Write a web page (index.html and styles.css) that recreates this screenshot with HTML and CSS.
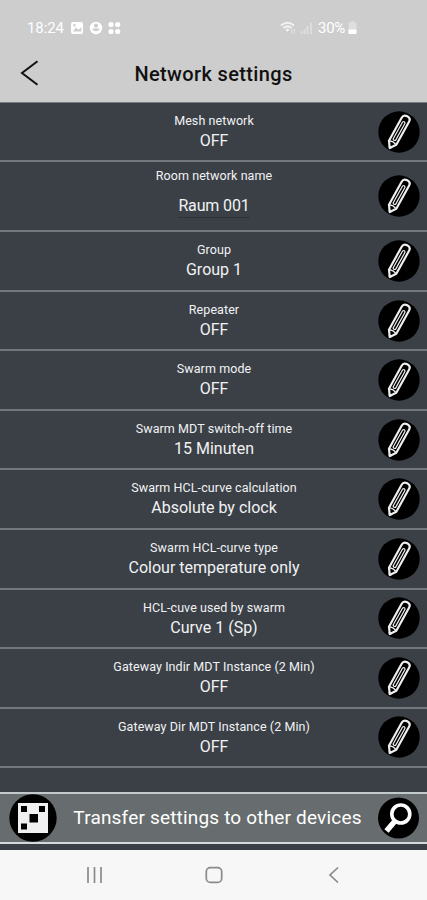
FILE: index.html
```html
<!DOCTYPE html>
<html lang="en">
<head>
<meta charset="utf-8">
<title>Network settings</title>
<link rel="stylesheet" href="styles.css">
</head>
<body>
<svg class="defs" width="0" height="0">
  <symbol id="pencil" viewBox="0 0 42 42">
    <circle cx="21" cy="21" r="20.7" fill="#000"/>
    <g transform="translate(20.700 20.800) rotate(29)" fill="none" stroke="#eee" stroke-linejoin="round">
      <path d="M-4.200 12.500V-14Q-4.200-17.700 0-17.700T4.200-14V12.500L0 18.500Z" stroke-width="2.200"/>
      <path d="M-1.400 9V-10.500Q0-12.500 1.400-10.500V9Q0 10.500-1.400 9Z" stroke-width="1.200"/>
      <path d="M-4.200 12.500Q0 10.800 4.200 12.500" stroke-width="1.200"/>
      <path d="M-1 17.500L0 18.500L1 17.500Z" fill="#eee" stroke-width="1.500"/>
    </g>
  </symbol>
</svg>
<header class="header">
  <div class="status">
    <span class="time">18:24</span>
    <svg class="status-apps" width="52" height="14" viewBox="0 0 52 14" fill="#fff">
      <path fill-rule="evenodd" d="M3 1h8q2 0 2 2v8q0 2-2 2H3q-2 0-2-2V3q0-2 2-2ZM2.800 10.500h8.600V6L8.500 8.700 6 6.600ZM3.500 3v2.500h2V3Z"/>
      <path fill-rule="evenodd" transform="translate(6.200 0)" d="M26 7a6.200 6.200 0 1 1-12.400 0A6.200 6.200 0 0 1 26 7ZM19.800 2.500a2.100 2.100 0 1 0 .01 0ZM16 8.200q3.800 4.300 7.600 0l-.5-.7h-6.600Z"/>
      <circle cx="41" cy="3.500" r="2.600"/><circle cx="47.700" cy="3.500" r="2.600"/><circle cx="41" cy="10.500" r="2.600"/><circle cx="47.700" cy="10.500" r="2.600"/>
    </svg>
    <svg class="status-signal" width="34" height="14" viewBox="0 0 34 14" fill="none" stroke="#f2f2f2">
      <path d="M1 4.500Q7.500-1 14 4.500M3.500 7Q7.500 3.700 11.500 7" stroke-width="2"/>
      <path d="M5.500 8.500Q7.500 7 9.500 8.500L7.500 11Z" fill="#f2f2f2" stroke="none"/>
      <path d="M11.700 8v4.500M14.300 8v4.500" stroke-width="1" opacity=".65"/>
      <path d="M21.500 13V10M24.500 13V8M27.500 13V5" stroke-width="2" opacity=".45"/>
      <path d="M31 13V1.500" stroke-width="1.400" opacity=".6"/>
    </svg>
    <span class="battery-text">30%</span>
    <svg class="battery" width="9" height="13" viewBox="0 0 9 13"><path d="M3 0h3v1.500h2.500V12q0 1-1 1h-6q-1 0-1-1V1.500H3Z" fill="#dedede"/><path d="M.5 8.500h8V12q0 1-1 1h-6q-1 0-1-1Z" fill="#fff"/></svg>
  </div>
  <div class="titlebar">
    <svg class="back" width="20" height="26" viewBox="0 0 20 26" fill="none" stroke="#111" stroke-width="2"><path d="M17.500 1.200 2 13l15.500 11.800"/></svg>
    <h1 class="title">Network settings</h1>
  </div>
</header>
<main class="list">
  <div class="row first"><div class="text"><div class="label">Mesh network</div><div class="value">OFF</div></div><svg class="edit"><use href="#pencil"/></svg></div>
  <div class="row tall"><div class="text"><div class="label">Room network name</div><div class="value input">Raum 001</div></div><svg class="edit"><use href="#pencil"/></svg></div>
  <div class="row"><div class="text"><div class="label">Group</div><div class="value">Group 1</div></div><svg class="edit"><use href="#pencil"/></svg></div>
  <div class="row"><div class="text"><div class="label">Repeater</div><div class="value">OFF</div></div><svg class="edit"><use href="#pencil"/></svg></div>
  <div class="row"><div class="text"><div class="label">Swarm mode</div><div class="value">OFF</div></div><svg class="edit"><use href="#pencil"/></svg></div>
  <div class="row"><div class="text"><div class="label">Swarm MDT switch-off time</div><div class="value">15 Minuten</div></div><svg class="edit"><use href="#pencil"/></svg></div>
  <div class="row"><div class="text"><div class="label">Swarm HCL-curve calculation</div><div class="value">Absolute by clock</div></div><svg class="edit"><use href="#pencil"/></svg></div>
  <div class="row"><div class="text"><div class="label">Swarm HCL-curve type</div><div class="value">Colour temperature only</div></div><svg class="edit"><use href="#pencil"/></svg></div>
  <div class="row"><div class="text"><div class="label">HCL-cuve used by swarm</div><div class="value">Curve 1 (Sp)</div></div><svg class="edit"><use href="#pencil"/></svg></div>
  <div class="row"><div class="text"><div class="label">Gateway Indir MDT Instance (2 Min)</div><div class="value">OFF</div></div><svg class="edit"><use href="#pencil"/></svg></div>
  <div class="row"><div class="text"><div class="label">Gateway Dir MDT Instance (2 Min)</div><div class="value">OFF</div></div><svg class="edit"><use href="#pencil"/></svg></div>
</main>
<div class="transfer">
  <svg class="code" width="48" height="48" viewBox="0 0 48 48"><circle cx="24" cy="24" r="23.700"/><path fill="#f0f0f0" d="M9 9h30v30H9z"/><path d="M12 12h6v6h-6zM30 12h6v6h-6zM20.500 20h8.500v8.500h-8.500zM12 29.500h6v6h-6z"/></svg>
  <span class="transfer-text">Transfer settings to other devices</span>
  <svg class="search" width="41" height="42" viewBox="0 0 41 42"><circle cx="20.500" cy="21" r="20.500"/><g fill="none" stroke="#fff"><circle cx="22.800" cy="17" r="9" stroke-width="3.600"/><path d="M17 24 8.500 34" stroke-width="5.500"/></g></svg>
</div>
<nav class="nav">
  <svg width="18" height="18" viewBox="0 0 18 18" fill="none" stroke="#8a8a8a" stroke-width="1.700"><path d="M3 1v16M9.500 1v16M16 1v16"/></svg>
  <svg width="18" height="18" viewBox="0 0 18 18" fill="none" stroke="#8a8a8a" stroke-width="1.700"><rect x="1.300" y="1.600" width="15.400" height="14.800" rx="4"/></svg>
  <svg width="18" height="18" viewBox="0 0 18 18" fill="none" stroke="#8a8a8a" stroke-width="1.700"><path d="M13 1.500 5 9l8 7.500"/></svg>
</nav>
</body>
</html>
```
FILE: styles.css
```css
* { box-sizing: border-box; }
body { margin: 0; width: 427px; height: 900px; display: flex; flex-direction: column; overflow: hidden; background: #3b4047; font-family: Roboto, sans-serif; }
svg { display: block; flex: none; }
.defs { position: absolute; }
.header { display: flex; flex-direction: column; height: 103px; background: #cdcdcd; border-bottom: 1px solid #777d80; }
.status { display: flex; align-items: center; height: 28px; margin-top: 14px; padding-left: 27px; color: #fff; font-size: 15px; }
.time { width: 43px; letter-spacing: -.1px; }
.status-signal { margin-left: 158px; }
.battery-text { margin-left: 4px; width: 30px; letter-spacing: -.3px; }
.titlebar { display: grid; grid-template-columns: 40px 1fr 40px; align-items: center; height: 60px; padding-top: 2px; }
.titlebar { flex: none; margin-top: 1px; }
.back { margin-left: 20px; }
.title { margin: 1px 0 0; text-align: center; font-size: 20px; font-weight: 500; color: #111; letter-spacing: .36px; }
.list { flex: none; }
.row { display: grid; grid-template-columns: 49px 1fr 49px; height: 59.550px; border-bottom: 2px solid #71777b; color: #f1f2f3; }
.row.first { height: 59.200px; }
.row.tall { height: 70.100px; }
.text { grid-column: 2; text-align: center; padding: 9px 0 0 1px; white-space: nowrap; }
.first .text { padding-top: 8.500px; }
.tall .text { padding-top: 5px; }
.label { font-size: 12.500px; line-height: 18px; letter-spacing: .08px; }
.value { font-size: 16px; line-height: 22px; }
.value.input { display: inline-block; margin-top: 9px; line-height: 23px; letter-spacing: -.15px; border-bottom: 1px solid #2e3337; }
.edit { width: 42px; height: 42px; align-self: center; }
.transfer { display: flex; align-items: center; height: 52px; margin-top: 23.500px; padding: 0 8px 0 9px; background: #676d6e; border-top: 2px solid #c2cacb; border-bottom: 2px solid #d5dada; color: #fff; flex: none; }
.transfer-text { flex: 1; text-align: center; font-size: 19px; letter-spacing: .18px; white-space: nowrap; }
.nav { display: flex; justify-content: center; gap: 102px; align-items: center; height: 50px; margin-top: auto; background: #f7f7f7; flex: none; }
```
